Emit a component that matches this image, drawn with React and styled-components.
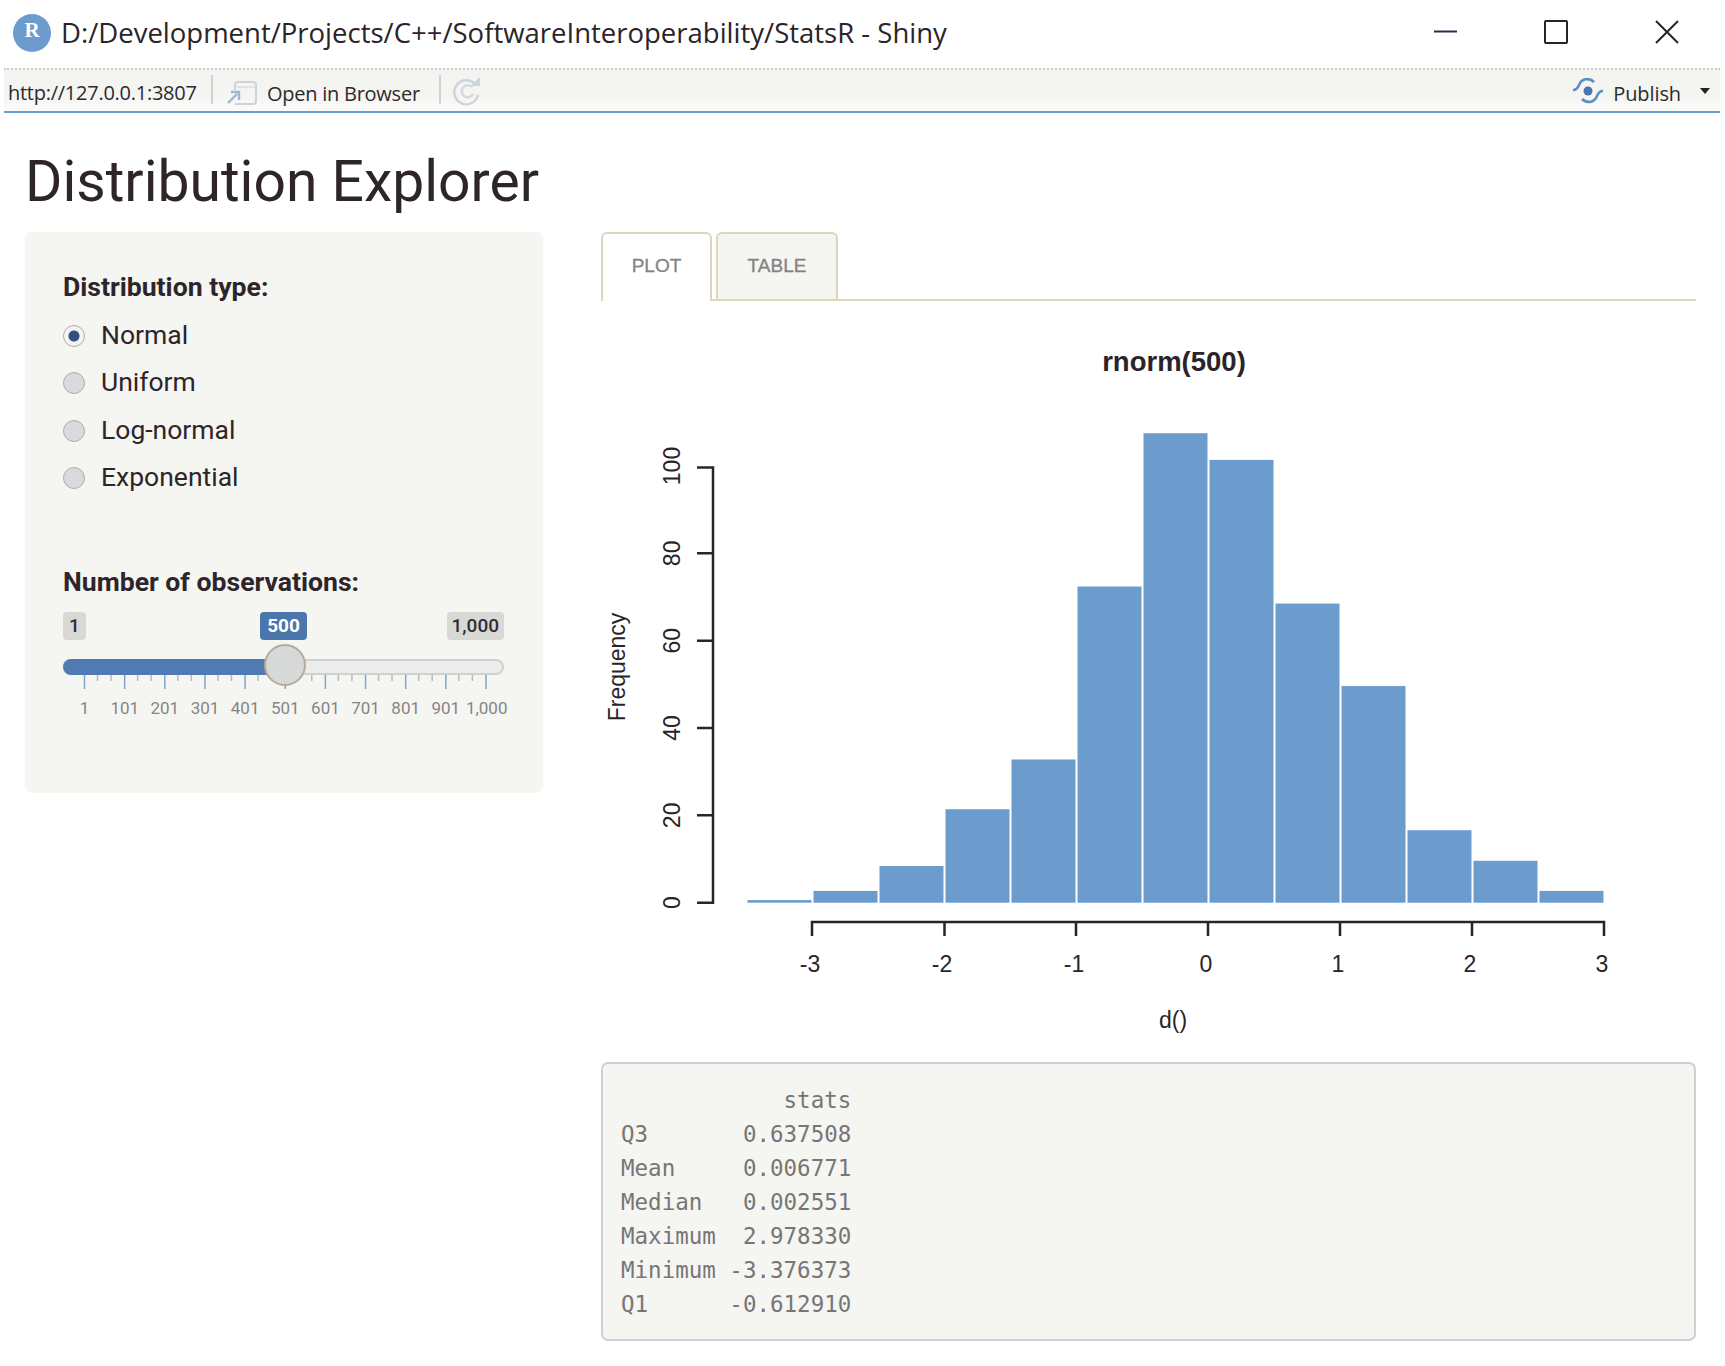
import styled, { createGlobalStyle } from 'styled-components'

const distributions = ['Normal', 'Uniform', 'Log-normal', 'Exponential']
const scaleLabels = ['1', '101', '201', '301', '401', '501', '601', '701', '801', '901', '1,000']
const barCounts = [0.6, 2.7, 8.4, 21.4, 32.8, 72.4, 107.5, 101.4, 68.5, 49.6, 16.6, 9.6, 2.7]
const statsText = `            stats
Q3       0.637508
Mean     0.006771
Median   0.002551
Maximum  2.978330
Minimum -3.376373
Q1      -0.612910`

const xAt = v => 1208 + 132 * v
const yAt = c => 902.7 - 4.367 * c

export default function App() {
  return (
    <>
      <GlobalStyle />
      <TitleBar>
        <AppIcon>R</AppIcon>
        <WindowTitle>D:/Development/Projects/C++/SoftwareInteroperability/StatsR - Shiny</WindowTitle>
        <WindowControls>
          <svg width="23" height="24" viewBox="0 0 23 24"><path d="M0 11.5h23" stroke="#23304a" strokeWidth="2" /></svg>
          <svg width="24" height="24" viewBox="0 0 24 24"><rect x="1" y="1" width="22" height="22" rx="1" fill="none" stroke="#2a2226" strokeWidth="2" /></svg>
          <svg width="24" height="24" viewBox="0 0 24 24"><path d="M1 1l22 22M23 1L1 23" stroke="#2a2226" strokeWidth="2" /></svg>
        </WindowControls>
      </TitleBar>
      <Toolbar>
        <UrlText>http://127.0.0.1:3807</UrlText>
        <Separator />
        <BrowserIcon width="32" height="24" viewBox="0 0 32 24" fill="none">
          <path d="M9 9V4q0-3 3-3h15q3 0 3 3v16q0 3-3 3H9" stroke="#ccd3da" strokeWidth="2" />
          <path d="M11 6h18" stroke="#dde2e6" strokeWidth="2" />
          <path d="M2 22l9-9M5 11h8v8" stroke="#9db8d4" strokeWidth="2.4" />
        </BrowserIcon>
        <ToolLabel>Open in Browser</ToolLabel>
        <Separator />
        <RefreshIcon width="30" height="30" viewBox="0 0 30 30" fill="none">
          <path d="M23 8a12 12 0 1 0 3 11" stroke="#ccd3da" strokeWidth="2.4" />
          <path d="M20 11a6 6 0 1 0 1 7" stroke="#d5dade" strokeWidth="2.4" />
          <path d="M18 10h10V1z" fill="#ccd3da" />
        </RefreshIcon>
        <ToolSpacer />
        <svg width="32" height="26" viewBox="0 0 32 26" fill="none">
          <path d="M1 12q4 0 6-5t7-6q5 0 8 3" stroke="#5b8fc4" strokeWidth="2.6" />
          <path d="M31 13q-4 0-6 5t-7 6q-5 0-8-3" stroke="#5b8fc4" strokeWidth="2.6" />
          <circle cx="16" cy="13" r="4.5" fill="#4a76ac" />
        </svg>
        <PublishLabel>Publish</PublishLabel>
        <Caret />
      </Toolbar>
      <Page>
        <Heading>Distribution Explorer</Heading>
        <Columns>
          <SidePanel>
            <FieldLabel>Distribution type:</FieldLabel>
            <RadioList>
              {distributions.map((d, i) => (
                <RadioRow key={d}>
                  <Radio type="radio" name="dist" defaultChecked={i === 0} />
                  {d}
                </RadioRow>
              ))}
            </RadioList>
            <FieldLabel>Number of observations:</FieldLabel>
            <Slider>
              <Bubbles>
                <Bubble>1</Bubble>
                <Bubble $current>500</Bubble>
                <Bubble $end>1,000</Bubble>
              </Bubbles>
              <Track>
                <TrackFill />
                <Handle />
              </Track>
              <svg width="443" height="15" viewBox="0 0 443 15" style={{ display: 'block' }}>
                {scaleLabels.map((l, i) => (
                  <path key={l} d={`M${21.5 + i * 40.15} 0v14`} stroke="#7da6d2" strokeWidth="1.5" />
                ))}
                {scaleLabels.slice(0, -1).map((l, i) => (
                  <path key={l} d={`M${34.5 + i * 40.15} 0v6M${48 + i * 40.15} 0v6`} stroke="#b9b9b9" strokeWidth="1.5" />
                ))}
              </svg>
              <ScaleLabels>
                {scaleLabels.map(l => <span key={l}>{l}</span>)}
              </ScaleLabels>
            </Slider>
          </SidePanel>
          <MainPanel>
            <TabRow>
              <Tab $active>PLOT</Tab>
              <Tab>TABLE</Tab>
            </TabRow>
            <Plot viewBox="601 301 1095 749" width="1095" height="749">
              <PlotTitle x="1174" y="371">rnorm(500)</PlotTitle>
              {barCounts.map((c, i) => (
                <rect
                  key={i}
                  x={xAt(-3.5 + i * 0.5) + 1.5}
                  y={yAt(c)}
                  width="64"
                  height={902.7 - yAt(c)}
                  fill="#6c9bce"
                />
              ))}
              <AxisLine d="M697 902.7h16V467.5h-16M697 815.3h16M697 728h16M697 640.7h16M697 553.3h16" />
              <AxisLine d="M812 936v-14h792v14M944.500 922v14M1076 922v14M1208 922v14M1340 922v14M1472 922v14" />
              {[0, 20, 40, 60, 80, 100].map(v => (
                <AxisText key={v} transform={`translate(680 ${yAt(v)}) rotate(-90)`}>{v}</AxisText>
              ))}
              {[-3, -2, -1, 0, 1, 2, 3].map(v => (
                <AxisText key={v} x={xAt(v) - 2} y="972">{v}</AxisText>
              ))}
              <AxisText x="1173" y="1028">d()</AxisText>
              <AxisText transform="translate(625 667) rotate(-90)">Frequency</AxisText>
            </Plot>
            <StatsBlock>{statsText}</StatsBlock>
          </MainPanel>
        </Columns>
      </Page>
    </>
  )
}

const GlobalStyle = createGlobalStyle`
  html, body {
    margin: 0;
    background: #fff;
  }
  body {
    font-family: Roboto, "Liberation Sans", sans-serif;
    color: #2d2529;
  }
`

const TitleBar = styled.header`
  height: 68px;
  box-sizing: border-box;
  display: flex;
  align-items: center;
  padding: 0 46px 3px 13px;
`

const AppIcon = styled.span`
  width: 38px;
  height: 38px;
  border-radius: 50%;
  background: #6c9bce;
  color: #fff;
  font: 700 21px "Liberation Serif", serif;
  display: flex;
  align-items: center;
  justify-content: center;
  padding-bottom: 4px;
  box-sizing: border-box;
`

const WindowTitle = styled.h2`
  margin: 0 0 0 10px;
  font: 400 27.5px "Open Sans", sans-serif;
  letter-spacing: 0;
  color: #2a2428;
  white-space: nowrap;
  flex: 1;
`

const WindowControls = styled.div`
  display: flex;
  align-items: center;
  gap: 87px;
  padding-bottom: 2px;
`

const Toolbar = styled.div`
  margin: 0 5px 0 4px;
  height: 45px;
  box-sizing: border-box;
  border-top: 2px dotted #c6ccd2;
  border-bottom: 2.5px solid #6c9bce;
  background: linear-gradient(#f4f4f1 60%, #fbfbfa);
  display: flex;
  align-items: center;
  padding: 0 10px 0 4px;
`

const UrlText = styled.span`
  font: 400 20px "Open Sans", sans-serif;
  letter-spacing: -0.26px;
  color: #2c2a2e;
  width: 203px;
  white-space: nowrap;
  padding-top: 3px;
`

const Separator = styled.i`
  width: 2px;
  height: 29px;
  background: #ccd3da;
  margin-bottom: 2px;
`

const BrowserIcon = styled.svg`
  margin: 4px 0 0 13px;
`

const RefreshIcon = styled.svg`
  margin-left: 11px;
`

const ToolLabel = styled.span`
  font: 400 20px "Open Sans", sans-serif;
  letter-spacing: -0.25px;
  color: #2c2a2e;
  width: 172px;
  margin-left: 9px;
  white-space: nowrap;
  padding-top: 6px;
`

const ToolSpacer = styled.div`
  flex: 1;
`

const PublishLabel = styled.span`
  font: 400 20px "Open Sans", sans-serif;
  letter-spacing: -0.1px;
  color: #2c2a2e;
  margin-left: 9px;
  padding-top: 6px;
`

const Caret = styled.i`
  width: 0;
  height: 0;
  margin-left: 19px;
  border: 5px solid transparent;
  border-top: 6px solid #222;
  border-bottom: 0;
`

const Page = styled.main`
  padding-left: 25px;
`

const Heading = styled.h1`
  margin: 0;
  height: 119px;
  box-sizing: border-box;
  padding-top: 36px;
  font: 400 57px/1.15 Roboto, sans-serif;
  color: #2d2529;
  white-space: nowrap;
`

const Columns = styled.div`
  display: flex;
  align-items: flex-start;
  gap: 58px;
`

const SidePanel = styled.aside`
  width: 518px;
  height: 561px;
  box-sizing: border-box;
  background: #f5f5f2;
  border-radius: 7px;
  padding: 40px 0 0 38px;
`

const FieldLabel = styled.div`
  font: 700 26.6px/30px Roboto, sans-serif;
  color: #2d2529;
`

const RadioList = styled.div`
  display: flex;
  flex-direction: column;
  gap: 17.4px;
  margin: 18px 0 75px;
`

const RadioRow = styled.label`
  display: flex;
  align-items: center;
  gap: 16px;
  font: 400 26.5px/30px Roboto, sans-serif;
  color: #2d2529;
`

const Radio = styled.input`
  appearance: none;
  width: 22px;
  height: 22px;
  margin: 2px 0 0;
  border-radius: 50%;
  border: 1.5px solid #b3aca6;
  background: #d8dadb;
  box-sizing: border-box;
  &:checked {
    background: radial-gradient(circle, #35507e 0 5px, #f3f3f2 6px);
  }
`

const Slider = styled.div`
  width: 443px;
  margin-top: 15px;
`

const Bubbles = styled.div`
  display: grid;
  grid-template-columns: 1fr auto 1fr;
  width: 441px;
  height: 28px;
`

const Bubble = styled.span`
  justify-self: ${p => (p.$end ? 'end' : 'start')};
  padding: 0 ${p => (p.$current ? 7 : p.$end ? 5 : 6)}px;
  border-radius: 4px;
  background: ${p => (p.$current ? '#4a76ac' : '#d8d8d5')};
  color: ${p => (p.$current ? '#fff' : '#2d2f38')};
  font: ${p => (p.$current ? 700 : 500)} 19px/28px Roboto, sans-serif;
`

const Track = styled.div`
  position: relative;
  width: 441px;
  height: 16px;
  margin-top: 19px;
  border-radius: 8px;
  border: 2px solid #cdd1d5;
  box-sizing: border-box;
  background: #ececea;
`

const TrackFill = styled.div`
  position: absolute;
  left: -2px;
  top: -2px;
  bottom: -2px;
  width: 205px;
  border-radius: 8px 0 0 8px;
  background: #4f7bb2;
`

const Handle = styled.div`
  position: absolute;
  left: 199px;
  top: -17px;
  width: 42px;
  height: 42px;
  box-sizing: border-box;
  border-radius: 50%;
  border: 2px solid #b8a99c;
  background: #d7d8d8;
`

const ScaleLabels = styled.div`
  display: grid;
  grid-template-columns: repeat(11, 40.15px);
  margin: 8px 0 0 1.5px;
  font: 400 17px/20px Roboto, sans-serif;
  color: #858585;
  span {
    text-align: center;
    white-space: nowrap;
  }
`

const MainPanel = styled.section`
  width: 1095px;
`

const TabRow = styled.nav`
  height: 69px;
  box-sizing: border-box;
  display: flex;
  gap: 4px;
  border-bottom: 2px solid #dcd6bf;
`

const Tab = styled.div`
  width: ${p => (p.$active ? 111 : 122)}px;
  height: 69px;
  box-sizing: border-box;
  border: 2px solid #dcd6bf;
  border-bottom: ${p => (p.$active ? 'none' : '2px solid #dcd6bf')};
  border-radius: 6px 6px 0 0;
  background: ${p => (p.$active ? '#fff' : '#f5f5f2')};
  color: #85827f;
  font: 400 19px/64px "Liberation Sans", sans-serif;
  text-align: center;
  -webkit-text-stroke: 0.3px #85827f;
`

const Plot = styled.svg`
  display: block;
`

const PlotTitle = styled.text`
  font: 700 27.5px "Liberation Sans", sans-serif;
  fill: #2a2428;
  text-anchor: middle;
`

const AxisLine = styled.path`
  fill: none;
  stroke: #2a2428;
  stroke-width: 2.5;
`

const AxisText = styled.text`
  font: 400 23px "Liberation Sans", sans-serif;
  fill: #2a2428;
  text-anchor: middle;
`

const StatsBlock = styled.pre`
  margin: 12px 0 0;
  height: 279px;
  box-sizing: border-box;
  padding: 19px 18px;
  border: 2px solid #cdd1d5;
  border-radius: 7px;
  background: #f5f5f2;
  color: #767676;
  font: 400 22.5px/34px "DejaVu Sans Mono", monospace;
`
